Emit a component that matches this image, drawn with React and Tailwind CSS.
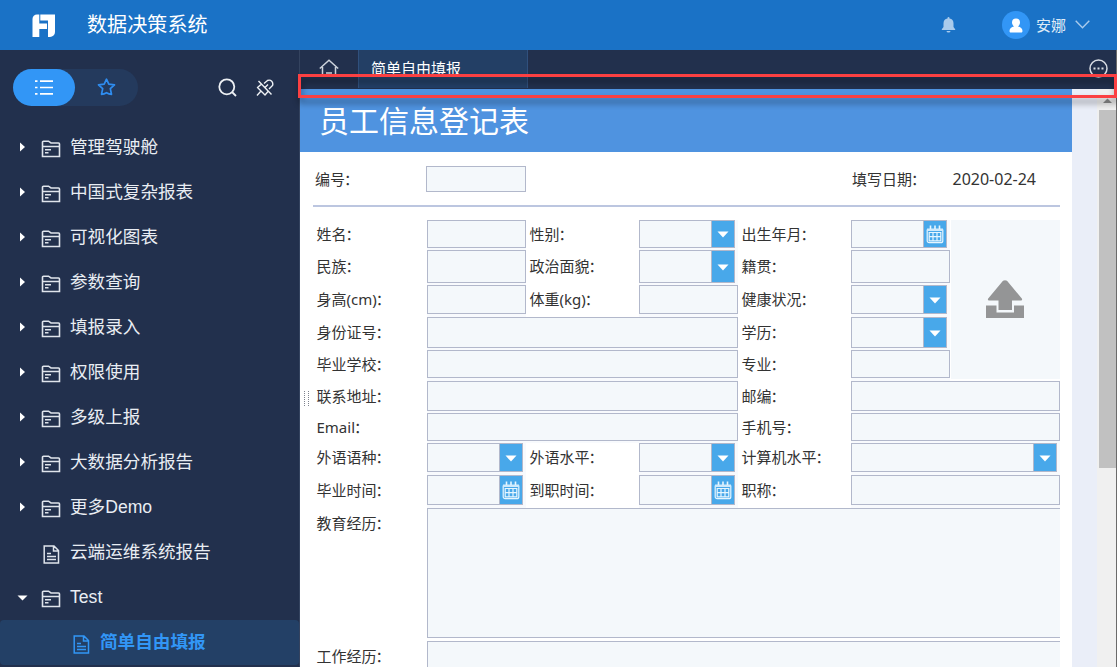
import React from 'react';
import clsx from 'clsx';

const menu = [
  { name: '管理驾驶舱', type: 'folder' },
  { name: '中国式复杂报表', type: 'folder' },
  { name: '可视化图表', type: 'folder' },
  { name: '参数查询', type: 'folder' },
  { name: '填报录入', type: 'folder' },
  { name: '权限使用', type: 'folder' },
  { name: '多级上报', type: 'folder' },
  { name: '大数据分析报告', type: 'folder' },
  { name: '更多Demo', type: 'folder' },
  { name: '云端运维系统报告', type: 'file' },
  { name: 'Test', type: 'folder', open: true },
];

// h = height of the input boxes in that row
const rows = [
  { h: 'h-[28px]', fields: [['姓名', 'text'], ['性别', 'select'], ['出生年月', 'date']] },
  { h: 'h-[33px]', fields: [['民族', 'text'], ['政治面貌', 'select'], ['籍贯', 'text']] },
  { h: 'h-[29px]', fields: [['身高(cm)', 'text'], ['体重(kg)', 'text'], ['健康状况', 'select']] },
  { h: 'h-[31px]', fields: [['身份证号', 'text', 'col-span-3'], ['学历', 'select']] },
  { h: 'h-[28px]', fields: [['毕业学校', 'text', 'col-span-3'], ['专业', 'text']] },
  { h: 'h-[30px]', fields: [['联系地址', 'text', 'col-span-3'], ['邮编', 'text', 'col-span-2']] },
  { h: 'h-[28px]', fields: [['Email', 'text', 'col-span-3'], ['手机号', 'text', 'col-span-2']] },
  { h: 'h-[29px]', fields: [['外语语种', 'select'], ['外语水平', 'select'], ['计算机水平', 'select', 'col-span-2']] },
  { h: 'h-[30px]', fields: [['毕业时间', 'date'], ['到职时间', 'date'], ['职称', 'text', 'col-span-2']] },
];

const Logo = () => (
  <svg width="24" height="24" viewBox="0 0 24 24" fill="#fff">
    <path d="M5 .5h2.300v9h7.700V15H7.300v8H.5V5A4.500 4.500 0 0 1 5 .5z" />
    <path d="M8.300.5H23V18a5 5 0 0 1-5 5h-2V6.500H8.300z" />
  </svg>
);

const FolderIcon = () => (
  <svg width="20" height="18" viewBox="0 0 20 18" fill="none" stroke="#dfe4ec" strokeWidth="1.600">
    <path d="M1.500 16.500V2.200a1 1 0 0 1 1-1h5l2.500 1.800h7.500a1 1 0 0 1 1 1v12.500z" />
    <path d="M1.500 6.500h17M4 9.700h6M4 12.700h3.500" />
  </svg>
);

const FileIcon = ({ color = '#dfe4ec' }) => (
  <svg width="17" height="19" viewBox="0 0 17 19" fill="none" stroke={color} strokeWidth="1.500">
    <path d="M1.200 1h9.800l4.500 4.500V18H1.200zM10.500 1v5h5M4 8.500h4M4 11.500h9M4 14.500h9" />
  </svg>
);

const CalendarIcon = () => (
  <svg width="18" height="19" viewBox="0 0 18 19" fill="none" stroke="#e6f6ff">
    <path d="M1.200 4.500v11.200a2 2 0 0 0 2 2h11.600a2 2 0 0 0 2-2V4.500" strokeWidth="1.200" />
    <path d="M1 3.500h16v2.500H1z" fill="#cfeafc" stroke="none" />
    <path d="M4.500.500v3.500M9 .5v3.500M13.500.500v3.500" strokeWidth="1.600" />
    <path d="M3.200 7.500h11.600v8.300H3.200zM7 7.500v8.300M11 7.500v8.300M3.200 11.700h11.600" strokeWidth="1.200" />
  </svg>
);

const Box = ({ type, height }) => {
  if (type === 'text') {
    return <div className={clsx('w-full border border-[#b2b8cb] bg-[#f4f8fb]', height)} />;
  }
  return (
    <div className={clsx('flex border border-[#b2b8cb] mr-[3px] bg-[#f4f8fb]', height)}>
      <div className="flex-1" />
      <div className="w-[23px] border-l border-[#b2b8cb] bg-[#48a8ea] flex items-center justify-center">
        {type === 'select' ? (
          <svg className="mt-px" width="12" height="7" viewBox="0 0 12 7" fill="#fff"><path d="M.5.500h11L6 6.500z" /></svg>
        ) : (
          <CalendarIcon />
        )}
      </div>
    </div>
  );
};

const Label = ({ children, first, height = 'h-[30px]' }) => (
  <div className={clsx('flex items-center whitespace-nowrap', height, first ? 'pl-[0.5px]' : 'pl-[3.5px]')}>
    {children}
    <span className="-ml-px">：</span>
  </div>
);

const Header = () => (
  <header className="flex h-[50px] shrink-0 items-center bg-[#1a72c6] text-white">
    <div className="ml-8 mt-px w-[55px]"><Logo /></div>
    <h1 className="text-[20px] leading-none tracking-[0.1px]">数据决策系统</h1>
    <div className="ml-auto flex items-center pr-[27px]">
      <svg className="mr-[46px]" width="15" height="16" viewBox="0 0 15 16" fill="#a9cbec">
        <path d="M7.500 0a1 1 0 0 1 1 1v.6a4.800 4.800 0 0 1 4 4.700V10l1.700 2.200v.8H.8v-.8L2.500 10V6.300a4.800 4.800 0 0 1 4-4.700V1a1 1 0 0 1 1-1zM5.500 14h4a2 1.500 0 0 1-4 0z" />
      </svg>
      <div className="flex h-7 w-7 items-center justify-center rounded-full bg-[#3296f6]">
        <svg width="14" height="15" viewBox="0 0 14 15" fill="#fff">
          <path d="M7 .5a4 4 0 0 1 4 4c0 1.700-1 3.300-2 4 2.500.5 4.500 2 4.500 4.500 0 .9-.4 1.500-1.200 1.500H1.700C.9 14.500.5 13.900.5 13c0-2.500 2-4 4.500-4.500-1-.7-2-2.300-2-4a4 4 0 0 1 4-4z" />
        </svg>
      </div>
      <span className="ml-[6px] text-[15px] leading-none text-[#dfebf7]">安娜</span>
      <svg className="ml-[9px] -mt-[2px]" width="15" height="9" viewBox="0 0 15 9" fill="none" stroke="#a9cbec" strokeWidth="1.400">
        <path d="M.7.800l6.800 7 6.800-7" />
      </svg>
    </div>
  </header>
);

const Sidebar = () => (
  <aside className="w-[300px] shrink-0 border-r border-[#34435f] bg-[#22304d] text-[17.6px] text-[#e9edf3]">
    <div className="flex h-[75px] items-center pl-[13px]">
      <div className="flex h-[37px] w-[125px] rounded-full bg-[#243a5d]">
        <div className="flex w-[62px] items-center justify-center rounded-full bg-[#3296f6]">
          <svg width="18" height="15" viewBox="0 0 18 15" stroke="#fff" strokeWidth="1.700">
            <path d="M0 1.200h2.500M5 1.200h13M0 7.500h2.500M5 7.500h13M0 13.800h2.500M5 13.800h13" />
          </svg>
        </div>
        <div className="flex w-[63px] items-center justify-center">
          <svg className="-mt-px" width="19" height="18" viewBox="0 0 19 18" fill="none" stroke="#2f8df0" strokeWidth="1.700" strokeLinejoin="round">
            <path d="M9.500 1.200l2.300 5 5.700.6-4.200 3.800 1.200 5.700q-2.600-.2-5-1.600-2.400 1.400-5 1.600l1.200-5.700L1.500 6.800l5.700-.6z" />
          </svg>
        </div>
      </div>
      <svg className="ml-20" width="19" height="19" viewBox="0 0 19 19" fill="none" stroke="#edf0f4" strokeWidth="1.800">
        <circle cx="8.800" cy="8.800" r="7.500" />
        <path d="M14 14l4 4" />
      </svg>
      <svg className="ml-[19px]" width="18" height="18" viewBox="0 0 18 18" fill="none" stroke="#edf0f4" strokeWidth="1.400" strokeLinejoin="round">
        <path d="M2.500 2l13 13.500M1 16.500L5 12M5 5.500L1.500 8.500 9 16l3-3.500M8 4.500l3.500-3q2.500-1 4.200.8t.8 4.200L13 10M8.500 9L12 5.500" />
      </svg>
    </div>
    <ul>
      {menu.map((item) => (
        <li key={item.name} className="flex h-[45px] items-center pl-[17px]">
          <span className="flex w-6">
            {item.type === 'folder' && (
              item.open
                ? <svg width="11" height="6" viewBox="0 0 11 6" fill="#fff"><path d="M.5.500h10l-5 5z" /></svg>
                : <svg className="-mt-px ml-[2px]" width="7" height="10" viewBox="0 0 7 10" fill="#fff"><path d="M1 .5l5 4.500-5 4.500z" /></svg>
            )}
          </span>
          <span className="w-[29px] pt-[3px]">
            {item.type === 'folder' ? <FolderIcon /> : <span className="block pl-[2px]"><FileIcon /></span>}
          </span>
          <span className="whitespace-nowrap leading-none">{item.name}</span>
        </li>
      ))}
      <li className="flex h-[45px] items-center rounded-sm bg-[#234066] pl-[73px] font-bold text-[#3296f6]">
        <span className="w-[27px] pt-[3px]"><FileIcon color="#3296f6" /></span>
        <span className="whitespace-nowrap leading-none">简单自由填报</span>
      </li>
    </ul>
  </aside>
);

const Tabs = () => (
  <nav className="flex h-[39px] shrink-0 bg-[#22304d]">
    <div className="flex w-[57px] justify-center pt-[9px]">
      <svg width="20" height="17" viewBox="0 0 20 17" fill="none" stroke="#cdd3dc" strokeWidth="1.500">
        <path d="M.8 9.500L10 1.200l9.200 8.300M3.500 8v8M16.500 8v8M7 14h6" />
      </svg>
    </div>
    <div className="ml-px h-[38px] w-[170px] border-x border-[#30507d] bg-[#233f65] pl-3 pt-[10px] text-[15px] leading-[18px] text-white">
      简单自由填报
    </div>
    <svg className="ml-auto mr-[8px] mt-[9px]" width="19" height="19" viewBox="0 0 19 19" fill="none" stroke="#d9dde4" strokeWidth="1.500">
      <circle cx="9.500" cy="9.500" r="8.500" />
      <path d="M4.500 9.500h2M8.500 9.500h2M12.500 9.500h2" strokeWidth="2" />
    </svg>
  </nav>
);

const Form = () => (
  <div className="h-full w-[772px] shrink-0 overflow-hidden bg-white text-[15px] text-[#333]">
    <div className="flex h-[63px] items-center bg-[#4f93e0] pl-[19px] text-[30px] leading-none text-white">
      <span>员工信息登记表</span>
    </div>
    <div className="ml-[13px] flex h-[55px] w-[747px] border-b-2 border-[#bcc6e0] pl-[2px] pt-[14px]">
      <span className="w-[111px] leading-[27px]">编号<span className="-ml-px">：</span></span>
      <div className="h-[26px] w-[100px] border border-[#b2b8cb] bg-[#f4f8fb]" />
      <span className="ml-[326px] w-[100px] leading-[27px]">填写日期<span className="-ml-px">：</span></span>
      <span className="pl-[0.5px] text-[16px] leading-[27px]">2020-02-24</span>
    </div>
    <div className="ml-4 mt-[13px] grid grid-cols-[111px_99px_113px_99px_113px_99px_110px] grid-rows-[30px_35px_32px_33px_31px_32px_30px_32px_33px_133px_40px]">
      {rows.map((row, i) => (
        <React.Fragment key={i}>
          {row.fields.map(([label, type, span], j) => (
            <React.Fragment key={label}>
              <Label first={j === 0} height={row.h}>{label}</Label>
              <div className={clsx('bg-[#f8fafd]', span)}>
                <Box type={type} height={row.h} />
              </div>
            </React.Fragment>
          ))}
          {i === 0 && (
            <div className="col-start-7 row-start-1 row-span-5 mb-[2px] ml-px flex items-center justify-center bg-[#f4f8fb] pb-px pr-[2px]">
              <svg width="38" height="38" viewBox="0 0 38 38" fill="#949596">
                <path d="M17 .8q2-1.200 4 0l15 18q.5 1.700-1 1.700h-9V30H12.500v-9.500H3q-1.500 0-1-1.700z" />
                <path d="M0 25.500h10.500V32.500h17.500V25.500h10V38H0z" />
              </svg>
            </div>
          )}
        </React.Fragment>
      ))}
      <Label first>教育经历</Label>
      <div className="col-span-6 h-[130px] border border-r-0 border-[#b2b8cb] bg-[#f4f8fb]" />
      <Label first>工作经历</Label>
      <div className="col-span-6 h-[60px] border border-r-0 border-[#b2b8cb] bg-[#f4f8fb]" />
    </div>
  </div>
);

const Scrollbar = () => (
  <div className="flex w-[19px] shrink-0 flex-col items-end bg-[#f0f0f0]">
    <div className="flex h-[21px] w-[17px] items-center justify-center pt-px">
      <svg width="9" height="5" viewBox="0 0 9 5" fill="#8a8a8a"><path d="M0 5L4.500.5 9 5z" /></svg>
    </div>
    <div className="h-[358px] w-[17px] bg-[#c1c1c1]" />
  </div>
);

export default function App() {
  return (
    <div className="relative flex h-[667px] w-[1117px] flex-col overflow-hidden font-['Liberation_Sans','Noto_Sans_CJK_SC',sans-serif]">
      <Header />
      <div className="flex min-h-0 flex-1">
        <Sidebar />
        <main className="flex min-w-0 flex-1 flex-col border-r border-[#6b6b6b]">
          <Tabs />
          <div className="flex min-h-0 flex-1 bg-[#eaeef8] font-['Noto_Sans','Noto_Sans_CJK_SC',sans-serif]">
            <Form />
            <div className="flex-1" />
            <Scrollbar />
          </div>
        </main>
      </div>
      {/* Drag handle of the sidebar */}
      <svg className="absolute left-[303px] top-[391px]" width="7" height="16" viewBox="0 0 7 16" stroke="#7d828e" strokeDasharray="1 1">
        <path d="M1.500 0v16M5.500 0v16" />
      </svg>
      {/* Highlight frame */}
      <div className="absolute left-[298px] top-[74px] h-[24px] w-[819px] border-[3px] border-[#fb4042] drop-shadow-[1px_5px_3px_rgba(0,0,0,0.45)]" />
    </div>
  );
}
